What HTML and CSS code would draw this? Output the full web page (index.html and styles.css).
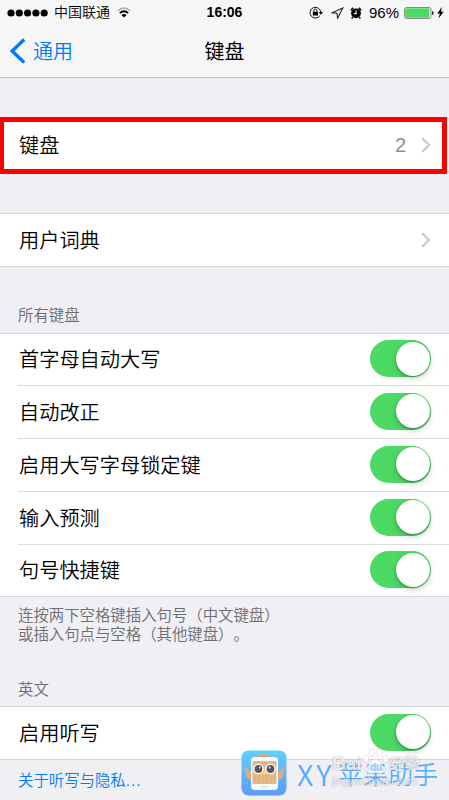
FILE: index.html
```
<!DOCTYPE html>
<html lang="zh-CN">
  <head>
    <meta charset="UTF-8">
    <meta name="viewport" content="width=device-width, initial-scale=1">
    <title>键盘</title>
    <link rel="stylesheet" href="styles.css">
  </head>
  <body>
    <header class="top">
      <div class="status">
        <div class="status-left">
          <svg class="dots" width="42" height="8" viewBox="0 0 42 8">
            <circle cx="4" cy="4" r="3.6"/><circle cx="12.3" cy="4" r="3.6"/><circle cx="20.6" cy="4" r="3.6"/><circle cx="28.9" cy="4" r="3.6"/><circle cx="37.2" cy="4" r="3.6"/>
          </svg>
          <span class="carrier">中国联通</span>
          <svg class="wifi" width="14" height="11" viewBox="0 0 14 11">
            <path d="M.8 3.8Q7-1.7 13.2 3.8" fill="none" stroke="#aaa" stroke-width="1.5"/>
            <path d="M2.8 6.2Q7 2.4 11.2 6.2" fill="none" stroke="#000" stroke-width="1.8"/>
            <path d="M4.4 8Q7 6 9.6 8L7 10.6z"/>
          </svg>
        </div>
        <span class="time">16:06</span>
        <div class="status-right">
          <svg width="15" height="13" viewBox="0 0 15 13">
            <path d="M10.8 9.8A5.4 5.4 0 1 1 11.8 6.5" fill="none" stroke="#111" stroke-width="1"/>
            <path d="M9.7 6.1h4.3l-2.2 2.7z"/>
            <path d="M3.8 5.8h5.2v3.7H3.8z"/>
            <path d="M4.9 6V4.5a1.5 1.5 0 0 1 3 0V6" fill="none" stroke="#111" stroke-width="1"/>
          </svg>
          <svg class="arrow" width="13" height="12" viewBox="0 0 13 12">
            <path d="M11.8 1L1 5.8l5 .5.6 5z" fill="none" stroke="#222" stroke-width="1.1"/>
          </svg>
          <svg class="alarm" width="12" height="12" viewBox="0 0 12 12">
            <circle cx="6" cy="6.3" r="4.9"/>
            <path d="M.7 3.2L3.2.9M11.3 3.2L8.8.9M2.7 10.3l-1 1.2M9.3 10.3l1 1.2" stroke="#000" stroke-width="1.5"/>
            <path d="M6.1 3.4v3.2H3.9" fill="none" stroke="#fff" stroke-width="1.1"/>
          </svg>
          <span class="percent">96%</span>
          <svg class="battery" width="30" height="12" viewBox="0 0 30 12">
            <rect x=".5" y=".5" width="26.5" height="11" rx="2" fill="#fff" stroke="#888"/>
            <rect x="1.2" y="1.2" width="24.2" height="9.6" rx=".8" fill="#4cd964"/>
            <path d="M28 4q1.7 0 1.7 2T28 8z" fill="#333"/>
          </svg>
          <svg class="bolt" width="7" height="12" viewBox="0 0 7 12">
            <path d="M4.8 0L.3 6.4h2.5L1.5 11.6 6.7 4.8H4.1z"/>
          </svg>
        </div>
      </div>
      <div class="nav">
        <a class="back">
          <svg width="16" height="26" viewBox="0 0 16 26"><path d="M15.2 1.5L3.2 13l12 11.5" fill="none" stroke="#007aff" stroke-width="3.4"/></svg>
          <span>通用</span>
        </a>
        <h1 class="title">键盘</h1>
      </div>
    </header>

    <main>
      <div class="list first">
        <div class="row"><span class="name">键盘</span><span class="value">2</span><svg class="chevron" width="10" height="16" viewBox="0 0 10 16"><path d="M1.2 1.2L8.2 8l-7 6.8"/></svg></div>
        <div class="highlight"></div>
      </div>

      <div class="list dictionary">
        <div class="row"><span class="name">用户词典</span><svg class="chevron" width="10" height="16" viewBox="0 0 10 16"><path d="M1.2 1.2L8.2 8l-7 6.8"/></svg></div>
      </div>

      <h2 class="label">所有键盘</h2>
      <div class="list keyboards">
        <div class="row"><span class="name">首字母自动大写</span><span class="switch"></span></div>
        <div class="row"><span class="name">自动改正</span><span class="switch"></span></div>
        <div class="row"><span class="name">启用大写字母锁定键</span><span class="switch"></span></div>
        <div class="row"><span class="name">输入预测</span><span class="switch"></span></div>
        <div class="row"><span class="name">句号快捷键</span><span class="switch"></span></div>
      </div>
      <p class="note">连按两下空格键插入句号（中文键盘）<br>或插入句点与空格（其他键盘）。</p>

      <h2 class="label english">英文</h2>
      <div class="list">
        <div class="row"><span class="name">启用听写</span><span class="switch"></span></div>
      </div>
      <a class="privacy">关于听写与隐私<span class="ellipsis">...</span></a>
    </main>

    <div class="brand">
      <svg width="46" height="46" viewBox="0 0 46 46">
        <defs>
          <linearGradient id="sky" x1="0" y1="0" x2="0" y2="1">
            <stop offset="0" stop-color="#62cffa"/>
            <stop offset="1" stop-color="#5c9cfb"/>
          </linearGradient>
        </defs>
        <rect x=".5" y=".5" width="45" height="45" rx="7" fill="url(#sky)"/>
        <path d="M17 8q-1-3 3-2 2-4 5-1 4-1 4 3z" fill="#dfa269"/>
        <path d="M11 30q-6-1-7-6l2 .5q-3-3-2.500-8l5 5 2.500 1zM36 30q6-1 7-6l-2 .5q3-3 2.500-8l-5 5-2.500 1z" fill="#e0ac78"/>
        <rect x="10" y="7" width="27" height="33" rx="4" fill="#fafafa"/>
        <rect x="11.500" y="11" width="24" height="23" fill="#e3b887"/>
        <path d="M13 28h21M13 31h21" stroke="#d9a772" stroke-dasharray="2 2"/>
        <circle cx="17.500" cy="19" r="5.300" fill="#fff"/>
        <circle cx="29.500" cy="19" r="5.300" fill="#fff"/>
        <circle cx="17.500" cy="19" r="3.900" fill="#56565b"/>
        <circle cx="29.500" cy="19" r="3.900" fill="#56565b"/>
        <circle cx="18.700" cy="17.500" r="1" fill="#ddd"/>
        <circle cx="28.700" cy="17.500" r="1" fill="#ddd"/>
        <path d="M23.500 20.500l2 2.300-2 3-2-3z" fill="#ffe23d"/>
        <rect x="20.500" y="36" width="6" height="1.400" rx=".7" fill="#ddd"/>
      </svg>
      <span class="brand-latin">XY</span><span class="brand-name">苹果助手</span>
    </div>

    <div class="stamp">
      <div class="stamp-name">
        <span>Bai</span>
        <svg class="paw" width="27" height="27" viewBox="0 0 27 27">
          <ellipse cx="4" cy="11" rx="2.800" ry="3.800"/><ellipse cx="10" cy="4.500" rx="2.800" ry="4"/><ellipse cx="17.500" cy="4.500" rx="2.800" ry="4"/><ellipse cx="23.500" cy="11" rx="2.800" ry="3.800"/>
          <path d="M13.500 11c4 0 5 4 8 7 4 4 1 8-3 8-3 0-3-1-5-1s-3 1-5 1c-4 0-7-4-3-8 3-3 4-7 8-7z"/>
          <text x="8" y="23">du</text>
        </svg>
        <span class="stamp-cn">经验</span>
      </div>
      <span class="stamp-url">jingyan.baidu.com</span>
    </div>
  </body>
</html>
```

FILE: styles.css
```
* {
  box-sizing: border-box;
}
html {
  background: #efeff4;
}
body {
  margin: 0;
  height: 800px;
  position: relative;
  overflow: hidden;
  color: #000;
  font-family: "Liberation Sans", "Noto Sans CJK SC", sans-serif;
  text-spacing-trim: space-all;
}
svg {
  display: block;
  flex: none;
}

/* status bar + navigation */
.top {
  height: 78px;
  background: #f6f6f6;
  border-bottom: 1px solid #bcbcc0;
}
.status {
  height: 25px;
  display: grid;
  grid-template-columns: 1fr auto 1fr;
  align-items: center;
  padding: 0 5px 0 7px;
  line-height: 25px;
}
.status-left,
.status-right {
  display: flex;
  align-items: center;
}
.status-right {
  justify-content: flex-end;
}
.carrier {
  font-size: 14px;
  font-weight: 350;
  margin: 0 0 0 5px;
}
.wifi {
  margin-left: 7px;
}
.time {
  font-size: 14px;
  font-weight: bold;
  margin-right: 2px;
}
.arrow {
  margin-left: 7px;
}
.alarm {
  margin-left: 6px;
}
.percent {
  font-size: 15px;
  margin-left: 7px;
}
.battery {
  margin-left: 5px;
}
.bolt {
  margin-left: 3px;
}
.nav {
  height: 52px;
  display: grid;
  grid-template-columns: 1fr auto 1fr;
  align-items: center;
  padding: 0 9px 1px;
}
.back {
  display: flex;
  align-items: center;
  gap: 8px;
  color: #007aff;
  font-size: 20px;
  font-weight: 350;
}
.title {
  margin: 0;
  font-size: 20px;
  font-weight: 400;
}

/* lists */
.list {
  position: relative;
  background: #fff;
  border-top: 1px solid #d5d5da;
  border-bottom: 1px solid #d5d5da;
}
.first {
  margin-top: 40px;
}
.dictionary {
  margin-top: 41px;
}
.row {
  height: 52px;
  display: flex;
  align-items: center;
  padding-right: 18px;
  margin-left: 18px;
}
.keyboards .row:first-child {
  height: 51px;
}
.row + .row {
  height: 53px;
  border-top: 1px solid #dcdce0;
}
.row + .row:last-child {
  height: 52px;
}
.name {
  flex: 1;
  padding: 1px 0 0 1px;
  font-size: 20.2px;
  font-weight: 350;
  line-height: 30px;
}
.value {
  color: #8e8e93;
  font-size: 20px;
  margin-right: 15px;
}
.chevron path {
  fill: none;
  stroke: #c7c7cc;
  stroke-width: 2;
}
.highlight {
  position: absolute;
  left: -1px;
  top: -2px;
  width: 448px;
  height: 57px;
  border: 5px solid #f00;
}
.switch {
  width: 61px;
  height: 37px;
  margin-bottom: 2px;
  border-radius: 19px;
  background: #4cd964;
  display: flex;
  justify-content: flex-end;
  padding: 1.5px;
}
.switch::after {
  content: "";
  width: 34px;
  height: 34px;
  border-radius: 50%;
  background: #fff;
  box-shadow: 0 1px 2px rgba(0, 90, 20, .5), 0 3px 7px rgba(0, 0, 0, .16);
}
.label {
  margin: 0;
  height: 66px;
  padding: 38px 18px 0;
  color: #6d6d72;
  font-size: 15.4px;
  font-weight: 350;
  line-height: 22px;
}
.note {
  margin: 0;
  padding: 9px 18px 0;
  color: #6d6d72;
  font-size: 15.4px;
  font-weight: 350;
  line-height: 19px;
}
.english {
  height: 62px;
  padding-top: 35px;
}
.privacy {
  display: block;
  padding: 10px 18px 0;
  color: #007aff;
  font-size: 15.4px;
  font-weight: 350;
  line-height: 22px;
}
.ellipsis {
  letter-spacing: 1px;
}

/* marks lying over the page */
.brand {
  position: absolute;
  left: 241px;
  top: 750px;
  display: flex;
  align-items: center;
  color: #55adff;
  font-family: "Noto Sans CJK SC", sans-serif;
  font-weight: 350;
  line-height: 40px;
  white-space: nowrap;
}
.brand-latin {
  margin-left: 10px;
  width: 41px;
  font-size: 29px;
  letter-spacing: 3px;
}
.brand-name {
  font-size: 25px;
}
.stamp {
  position: absolute;
  left: 332px;
  top: 746px;
  color: rgba(255, 255, 255, .8);
  font-weight: bold;
  text-shadow: 0 0 1.5px rgba(110, 110, 120, .7);
  white-space: nowrap;
}
.stamp-name {
  display: flex;
  align-items: flex-end;
  height: 29px;
  font-size: 19px;
  line-height: 22px;
}
.stamp-cn {
  font-size: 15px;
  margin-left: 1px;
}
.stamp-url {
  display: block;
  font-size: 10.5px;
  font-weight: normal;
  line-height: 12px;
}
.paw {
  fill: rgba(255, 255, 255, .75);
  stroke: rgba(130, 130, 140, .4);
  stroke-width: .5;
}
.paw text {
  fill: #9cc4ee;
  stroke: none;
  font-size: 10px;
  text-shadow: none;
}
```
